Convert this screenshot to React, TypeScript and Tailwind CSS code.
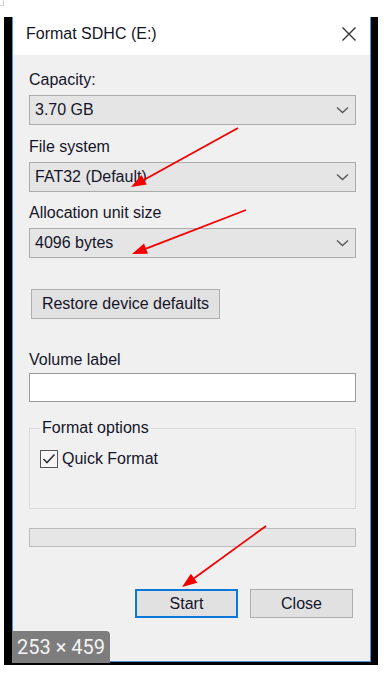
import React from 'react';

type Pt = [number, number];

// red annotation arrows drawn over the dialog screenshot
function Arrow({ from, to }: { from: Pt; to: Pt }) {
  const dx = to[0] - from[0];
  const dy = to[1] - from[1];
  const len = Math.hypot(dx, dy);
  const ux = dx / len;
  const uy = dy / len;
  const bx = to[0] - ux * 15;
  const by = to[1] - uy * 15;
  const nx = -uy * 5.5;
  const ny = ux * 5.5;
  return (
    <g>
      <line x1={from[0]} y1={from[1]} x2={bx} y2={by} stroke="#f20000" strokeWidth={1.8} />
      <polygon points={`${to[0]},${to[1]} ${bx + nx},${by + ny} ${bx - nx},${by - ny}`} fill="#f20000" />
    </g>
  );
}

function Chevron() {
  return (
    <svg width="13" height="8" viewBox="0 0 13 8" className="shrink-0">
      <polyline points="1,1.5 6.5,6.5 12,1.5" fill="none" stroke="#555" strokeWidth={1.3} />
    </svg>
  );
}

function Select({ value }: { value: string }) {
  return (
    <div className="mt-[5px] h-[30px] flex items-center justify-between border border-[#acacac] bg-[#e5e5e5] pl-[5px] pr-[6px]">
      <span className="text-[16px] leading-[20px] text-[#15152a]">{value}</span>
      <Chevron />
    </div>
  );
}

export default function App() {
  return (
    <div
      className="relative w-[392px] h-[681px] bg-white overflow-hidden pt-[17px] pl-[4px]"
      style={{ fontFamily: '"Liberation Sans", Arial, sans-serif' }}
    >
      <div className="absolute left-0 top-0 w-[4px] h-[6px] border-r border-b border-[#d4d4d4]" />

      <div className="w-[374px] bg-black pl-[8px] pr-[7px] pb-[3px]">
        <div className="w-[359px] h-[645px] flex flex-col border-x border-b border-[#4a93dc] bg-[#f0f0f0]">
          {/* title bar */}
          <div className="h-[38px] shrink-0 bg-white flex items-center justify-between pl-[13px] pr-[13px] pb-[4px]">
            <span className="text-[16px] leading-[20px] text-[#15152a]">Format SDHC (E:)</span>
            <svg width="16" height="16" viewBox="0 0 16 16">
              <path d="M1.5 1.5 L14.5 14.5 M14.5 1.5 L1.5 14.5" stroke="#333" strokeWidth={1.4} />
            </svg>
          </div>

          <div className="flex flex-col pl-[16px] pr-[14px] pt-[15px] text-[16px] leading-[20px] text-[#15152a]">
            <div>
              <div>Capacity:</div>
              <Select value="3.70 GB" />
            </div>
            <div className="mt-[12px]">
              <div>File system</div>
              <Select value="FAT32 (Default)" />
            </div>
            <div className="mt-[11px]">
              <div>Allocation unit size</div>
              <Select value="4096 bytes" />
            </div>

            <button className="mt-[31px] ml-[2px] w-[189px] h-[30px] border border-[#adadad] bg-[#e1e1e1] text-[16px] text-[#15152a]">
              Restore device defaults
            </button>

            <div className="mt-[31px]">Volume label</div>
            <div className="mt-[3px] h-[29px] border border-[#999] bg-white" />

            <fieldset className="mt-[16px] h-[91px] border border-[#dadada] pl-[10px]">
              <legend className="px-[2px] text-[16px] leading-[20px]">Format options</legend>
              <div className="mt-[11px] flex items-center gap-[4px]">
                <div className="w-[18px] h-[18px] border-[1.5px] border-[#555] bg-[#f7f7f7] flex items-center justify-center">
                  <svg width="14" height="12" viewBox="0 0 14 12">
                    <polyline points="1.5,6 5,9.5 12.5,1.5" fill="none" stroke="#333" strokeWidth={1.6} />
                  </svg>
                </div>
                <span>Quick Format</span>
              </div>
            </fieldset>

            <div className="mt-[19px] h-[19px] border border-[#bcbcbc] bg-[#e6e6e6]" />

            <div className="mt-[42px] flex justify-end gap-[12px] pr-[3px]">
              <button className="w-[103px] h-[29px] border-2 border-[#0a78d7] bg-[#e1e1e1] text-[16px] text-[#15152a]">
                Start
              </button>
              <button className="w-[103px] h-[29px] border border-[#adadad] bg-[#e1e1e1] text-[16px] text-[#15152a]">
                Close
              </button>
            </div>
          </div>
        </div>
      </div>

      {/* size badge */}
      <div className="absolute left-[12px] top-[631px] w-[98px] h-[32px] rounded-tr-[4px] bg-[#7d7d7d] flex items-center justify-center">
        <span className="text-[20px] leading-[24px] text-[#f3f3f3]" style={{ fontFamily: 'Roboto, sans-serif' }}>
          253 × 459
        </span>
      </div>

      <svg className="absolute left-0 top-0 pointer-events-none" width="392" height="681">
        <Arrow from={[238, 128]} to={[131, 187]} />
        <Arrow from={[246, 210]} to={[132, 254]} />
        <Arrow from={[266, 526]} to={[182, 587]} />
      </svg>
    </div>
  );
}
